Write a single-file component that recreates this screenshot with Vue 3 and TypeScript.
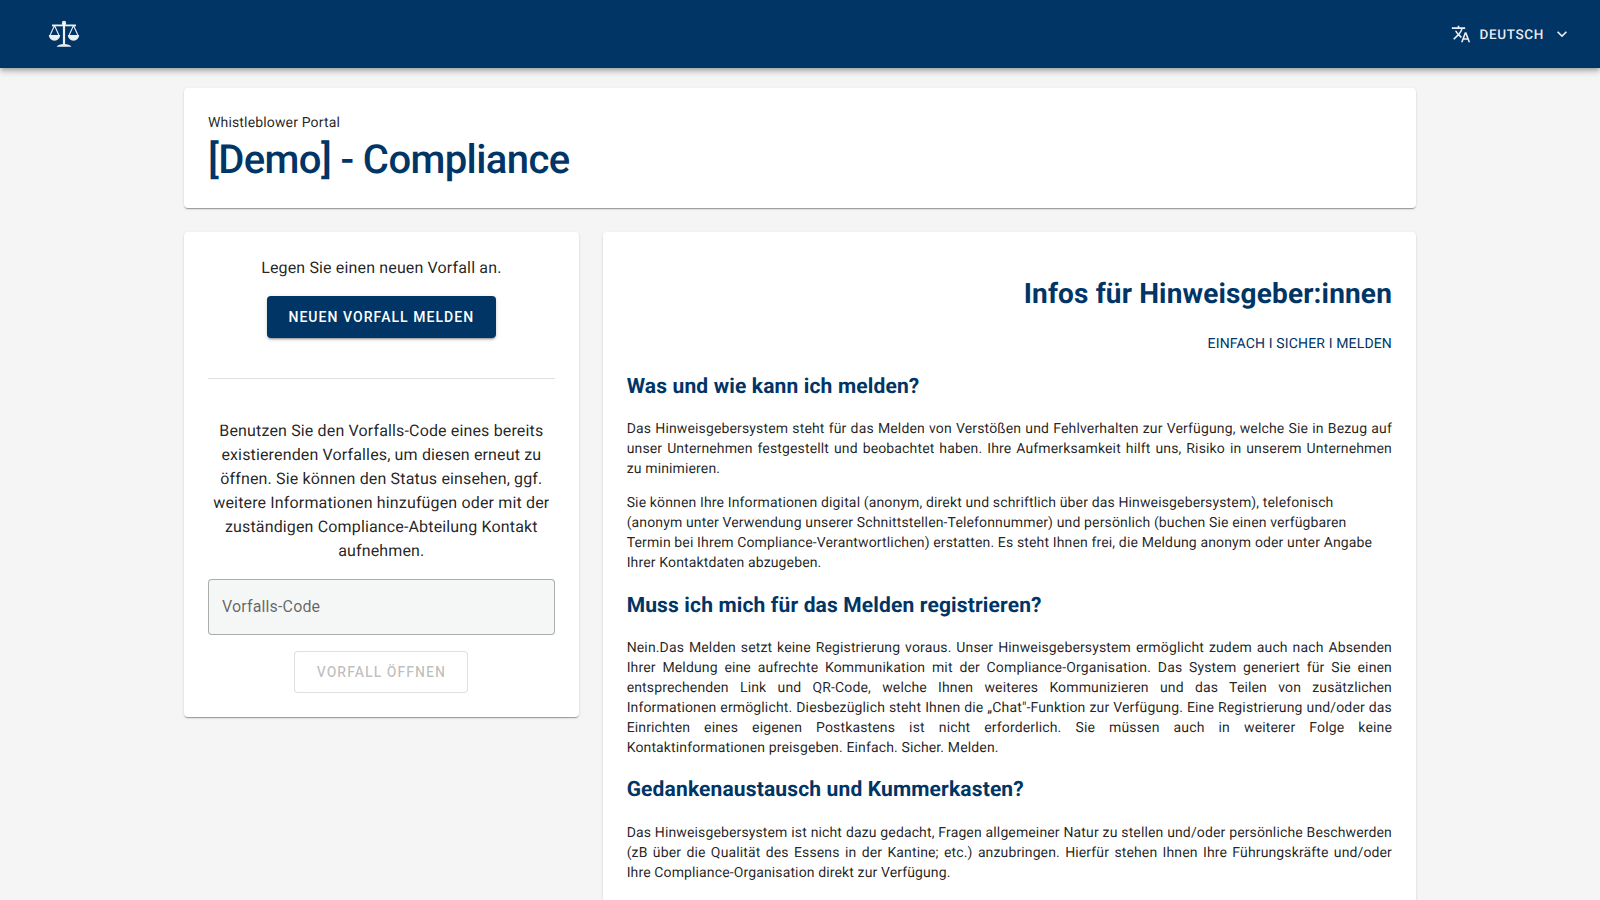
<script setup lang="ts">
const scale = 1
</script>

<template>
  <div class="app">
    <header class="bar">
      <svg class="logo" viewBox="0 0 32 28" fill="none" stroke="currentColor" :stroke-width="1.4 * scale">
        <circle cx="16" cy="3" r="2.2" fill="currentColor" stroke="none" />
        <path d="M4 5.4h24" stroke-width="1.8" />
        <path d="M16 3v21" stroke-width="2.2" />
        <path d="M6.500 5.600 2.200 15M6.500 5.600 10.800 15M25.500 5.600 21.200 15M25.500 5.600 29.800 15" stroke-width="1.1" />
        <path d="M0.800 15h11.400a5.700 5.700 0 0 1-11.400 0ZM19.800 15h11.400a5.700 5.700 0 0 1-11.400 0Z" fill="currentColor" stroke="none" />
        <path d="M8.500 26.800c1.500-1.800 4-2.800 7.500-2.800s6 1 7.500 2.800Z" fill="currentColor" stroke="none" />
      </svg>
      <div class="lang">
        <svg class="ico" viewBox="0 0 24 24" fill="currentColor">
          <path d="M12.87,15.07L10.33,12.56L10.36,12.53C12.1,10.59 13.34,8.36 14.07,6H17V4H10V2H8V4H1V6H12.17C11.5,7.92 10.44,9.75 9,11.35C8.07,10.32 7.3,9.19 6.69,8H4.69C5.42,9.63 6.42,11.17 7.67,12.56L2.58,17.58L4,19L9,14L12.11,17.11L12.87,15.07M18.5,10H16.5L12,22H14L15.12,19H19.87L21,22H23L18.5,10M15.88,17L17.5,12.67L19.12,17H15.88Z" />
        </svg>
        <span class="lang-text">DEUTSCH</span>
        <svg class="ico" viewBox="0 0 24 24" fill="currentColor">
          <path d="M7.41,8.58L12,13.17L16.59,8.58L18,10L12,16L6,10L7.41,8.58Z" />
        </svg>
      </div>
    </header>

    <main class="page">
      <section class="card head">
        <div class="overline">Whistleblower Portal</div>
        <h1 class="title">[Demo] - Compliance</h1>
      </section>

      <div class="cols">
        <aside class="card side">
          <p class="lead">Legen Sie einen neuen Vorfall an.</p>
          <button class="btn primary" type="button">NEUEN VORFALL MELDEN</button>
          <hr class="rule" />
          <p class="lead explain">
            Benutzen Sie den Vorfalls-Code eines bereits existierenden Vorfalles, um diesen erneut zu öffnen. Sie können den Status einsehen, ggf. weitere Informationen hinzufügen oder mit der zuständigen Compliance-Abteilung Kontakt aufnehmen.
          </p>
          <input class="code" type="text" placeholder="Vorfalls-Code" />
          <button class="btn ghost" type="button" disabled>VORFALL ÖFFNEN</button>
        </aside>

        <article class="card info">
          <h2 class="info-title">Infos für Hinweisgeber:innen</h2>
          <div class="tagline">EINFACH I SICHER I MELDEN</div>

          <h3>Was und wie kann ich melden?</h3>
          <p class="just">Das Hinweisgebersystem steht für das Melden von Verstößen und Fehlverhalten zur Verfügung, welche Sie in Bezug auf unser Unternehmen festgestellt und beobachtet haben. Ihre Aufmerksamkeit hilft uns, Risiko in unserem Unternehmen zu minimieren.</p>
          <p class="second">Sie können Ihre Informationen digital (anonym, direkt und schriftlich über das Hinweisgebersystem), telefonisch (anonym unter Verwendung unserer Schnittstellen-Telefonnummer) und persönlich (buchen Sie einen verfügbaren Termin bei Ihrem Compliance-Verantwortlichen) erstatten. Es steht Ihnen frei, die Meldung anonym oder unter Angabe Ihrer Kontaktdaten abzugeben.</p>

          <h3>Muss ich mich für das Melden registrieren?</h3>
          <p class="just">Nein.Das Melden setzt keine Registrierung voraus. Unser Hinweisgebersystem ermöglicht zudem auch nach Absenden Ihrer Meldung eine aufrechte Kommunikation mit der Compliance-Organisation. Das System generiert für Sie einen entsprechenden Link und QR-Code, welche Ihnen weiteres Kommunizieren und das Teilen von zusätzlichen Informationen ermöglicht. Diesbezüglich steht Ihnen die „Chat"-Funktion zur Verfügung. Eine Registrierung und/oder das Einrichten eines eigenen Postkastens ist nicht erforderlich. Sie müssen auch in weiterer Folge keine Kontaktinformationen preisgeben. Einfach. Sicher. Melden.</p>

          <h3 class="tight">Gedankenaustausch und Kummerkasten?</h3>
          <p class="just narrow">Das Hinweisgebersystem ist nicht dazu gedacht, Fragen allgemeiner Natur zu stellen und/oder persönliche Beschwerden (zB über die Qualität des Essens in der Kantine; etc.) anzubringen. Hierfür stehen Ihnen Ihre Führungskräfte und/oder <span class="keep">Ihre Compliance-Organisation</span> direkt zur Verfügung.</p>
        </article>
      </div>
    </main>
  </div>
</template>

<style>
html, body { margin: 0; background: #f5f5f5; overflow: hidden; }
</style>

<style scoped>
.app {
  height: 100vh;
  overflow: hidden;
  background: #f5f5f5;
  font-family: Roboto, "Liberation Sans", sans-serif;
  color: rgba(0, 0, 0, 0.87);
  text-rendering: geometricPrecision;
}
.bar {
  height: 68px;
  box-sizing: border-box;
  background: #003566;
  color: rgba(255, 255, 255, 0.92);
  display: flex;
  align-items: center;
  justify-content: space-between;
  padding: 0 28px 0 48px;
  box-shadow: 0 2px 4px -1px rgba(0,0,0,.2), 0 4px 5px 0 rgba(0,0,0,.14), 0 1px 10px 0 rgba(0,0,0,.12);
  position: relative;
}
.logo { width: 32px; height: 28px; display: block; }
.lang { display: flex; align-items: center; }
.ico { width: 20px; height: 20px; display: block; }
.lang-text {
  font-size: 13.5px;
  font-weight: 500;
  letter-spacing: 0.65px;
  margin: 0 8px 0 8px;
  padding-top: 2px;
}
.page {
  width: 1232px;
  margin: 0 auto;
  padding-top: 20px;
}
.card {
  background: #fff;
  border-radius: 4px;
  box-shadow: 0 2px 1px -1px rgba(0,0,0,.2), 0 1px 1px 0 rgba(0,0,0,.14), 0 1px 3px 0 rgba(0,0,0,.12);
  box-sizing: border-box;
}
.head { height: 120px; padding: 25px 24px 0; }
.overline { font-size: 14px; line-height: 20px; letter-spacing: 0.15px; }
.title {
  margin: 3px 0 0;
  font-size: 40px;
  line-height: 48px;
  font-weight: 500;
  letter-spacing: -0.6px;
  color: #003566;
}
.cols {
  display: grid;
  grid-template-columns: 394.67px 813.33px;
  gap: 24px;
  align-items: start;
  margin-top: 24px;
}
.side { padding: 24px; text-align: center; display: flex; flex-direction: column; align-items: center; }
.lead { margin: 0; font-size: 16px; line-height: 24px; letter-spacing: 0.15px; }
.btn {
  font-family: inherit;
  font-size: 14px;
  font-weight: 500;
  letter-spacing: 1.05px;
  box-sizing: border-box;
  border-radius: 4px;
  height: 42px;
  padding: 0 21.5px;
}
.primary {
  margin-top: 16px;
  background: #003566;
  color: #fff;
  border: 0;
  box-shadow: 0 3px 1px -2px rgba(0,0,0,.2), 0 2px 2px 0 rgba(0,0,0,.14), 0 1px 5px 0 rgba(0,0,0,.12);
}
.rule {
  width: 100%;
  margin: 40px 0 40px;
  border: 0;
  border-top: 1px solid rgba(0,0,0,.12);
}
.explain { width: 100%; }
.code {
  width: 100%;
  height: 56px;
  margin-top: 16px;
  box-sizing: border-box;
  padding: 0 13px 1px;
  font-family: inherit;
  font-size: 16px;
  letter-spacing: 0.15px;
  background: #f5f7f7;
  border: 1px solid rgba(0,0,0,.3);
  border-radius: 4px;
  outline: none;
}
.code::placeholder { color: rgba(0,0,0,.6); opacity: 1; }
.ghost {
  margin-top: 16px;
  background: #fff;
  color: rgba(0,0,0,.26);
  border: 1px solid rgba(0,0,0,.12);
}
.info { padding: 24px; min-height: 800px; }
.info-title {
  margin: 20px 0 0;
  font-size: 28px;
  line-height: 36px;
  font-weight: 700;
  letter-spacing: 0.15px;
  text-align: right;
  color: #003566;
}
.tagline {
  margin-top: 22px;
  text-align: right;
  font-size: 14px;
  line-height: 20px;
  letter-spacing: 0.15px;
  color: #003566;
}
h3 {
  margin: 19px 0 18px;
  font-size: 21px;
  line-height: 28px;
  font-weight: 700;
  letter-spacing: 0.15px;
  color: #003566;
}
h3.tight { margin: 18px 0 19px; }
p.just, p.second {
  margin: 0;
  font-size: 14px;
  line-height: 20px;
  letter-spacing: 0.14px;
}
.just { text-align: justify; }
p.narrow { letter-spacing: 0.125px; }
.keep { white-space: nowrap; }
.second { margin-top: 14px !important; }
</style>
